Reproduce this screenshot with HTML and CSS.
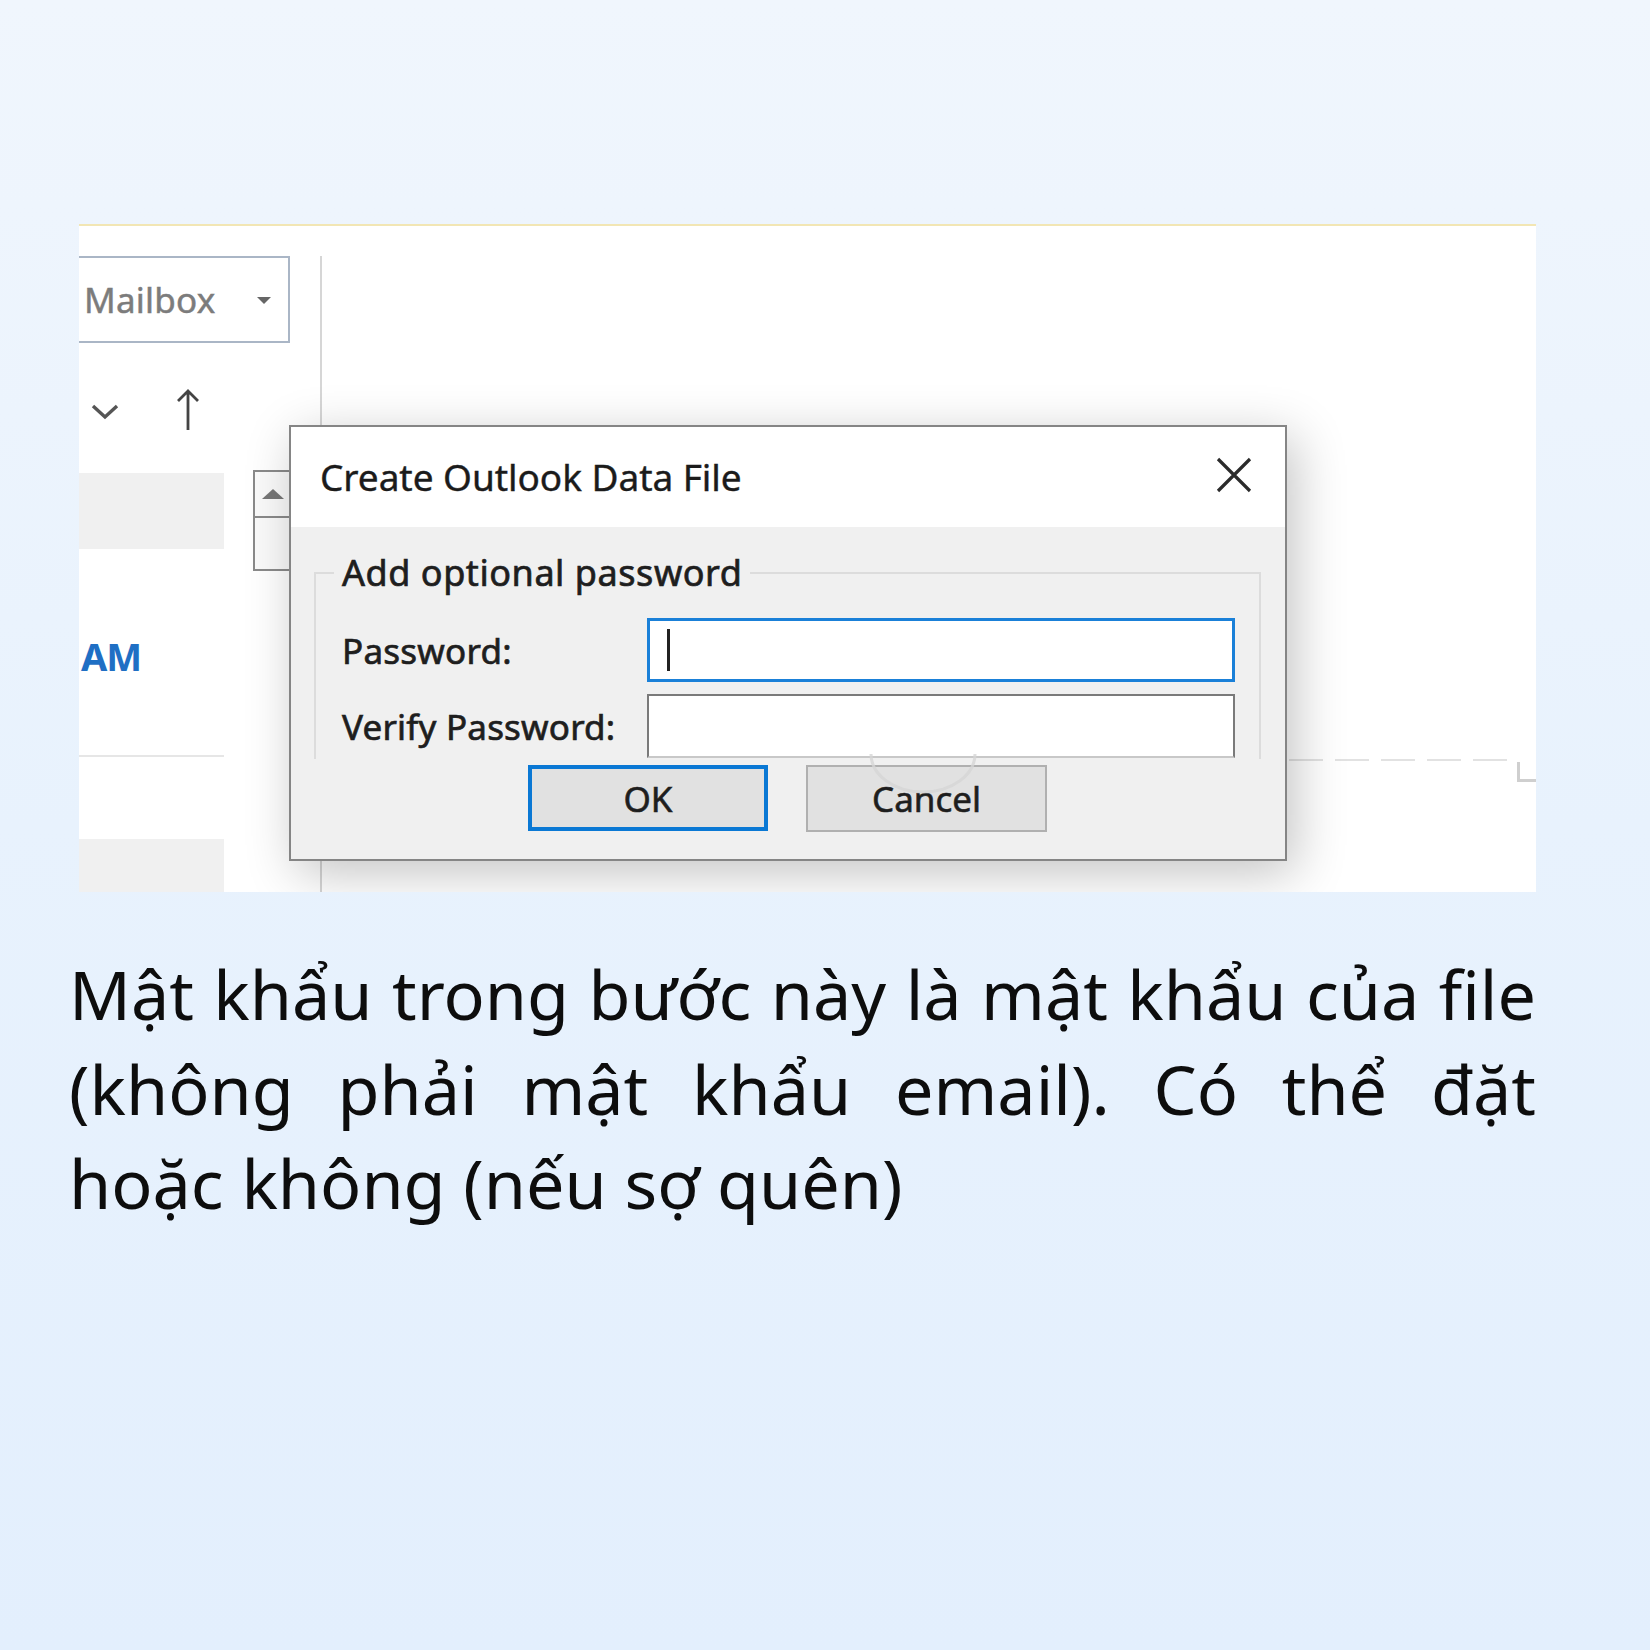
FILE: index.html
```html
<!DOCTYPE html>
<html lang="vi">
<head>
<meta charset="utf-8">
<title>Create Outlook Data File</title>
<link rel="stylesheet" href="styles.css">
</head>
<body>
<main class="page">
  <section class="shot">
    <div class="pane">
      <div class="mailbox">
        <span class="mailbox-text">Mailbox</span>
        <svg class="caret" width="14" height="8" viewBox="0 0 14 8"><path d="M0 0 H14 L7 7 Z" fill="#666"/></svg>
      </div>
      <div class="sortrow">
        <svg class="chev" width="30" height="20" viewBox="0 0 30 20"><path d="M3 4 L15 15 L27 4" fill="none" stroke="#555" stroke-width="3.4"/></svg>
        <svg class="uparrow" width="24" height="42" viewBox="0 0 24 42"><path d="M12 2 V41 M2 12 L12 2 L22 12" fill="none" stroke="#444" stroke-width="2.8"/></svg>
      </div>
      <div class="graybar"></div>
      <div class="time">AM</div>
      <div class="rule"></div>
      <div class="graybar last"></div>
    </div>

    <div class="scroll">
      <div class="scroll-up"><svg width="22" height="12" viewBox="0 0 22 12"><path d="M0 11 L11 1 L22 11 Z" fill="#777"/></svg></div>
    </div>

    <div class="dialog">
      <div class="titlebar">
        <span class="title">Create Outlook Data File</span>
        <svg class="close" width="36" height="36" viewBox="0 0 36 36"><path d="M2 2 L34 34 M34 2 L2 34" stroke="#2b2b2b" stroke-width="3.2"/></svg>
      </div>
      <div class="dbody">
        <fieldset class="group">
          <legend>Add optional password</legend>
          <div class="row">
            <label class="lbl">Password:</label>
            <div class="input active"><span class="cursor"></span></div>
          </div>
          <div class="row">
            <label class="lbl verify">Verify Password:</label>
            <div class="input"></div>
          </div>
        </fieldset>
        <div class="buttons">
          <div class="btn ok">OK</div>
          <div class="btn cancel">Cancel</div>
        </div>
      </div>
    </div>

    <svg class="arc" width="120" height="60" viewBox="0 0 120 60"><path d="M8 18 A 52 38 0 0 0 112 18" fill="none" stroke="#d6d6d6" stroke-width="3"/></svg>
    <div class="dashes"></div>
    <div class="corner"></div>
  </section>

  <p class="caption"><span class="cap-body">Mật khẩu trong bước này là mật khẩu của file (không phải mật khẩu email). Có thể đặt</span> <span class="cap-end">hoặc không (nếu sợ quên)</span></p>
</main>
</body>
</html>
```
FILE: styles.css
```css
html, body {
  margin: 0;
  padding: 0;
}
body {
  width: 1650px;
  height: 1650px;
  background: linear-gradient(180deg, #f0f6fd 0%, #e8f2fd 50%, #e3effd 100%);
  font-family: "Noto Sans", "Open Sans", sans-serif;
  overflow: hidden;
}
.page {
  display: flex;
  flex-direction: column;
  padding-top: 224px;
}
.shot {
  position: relative;
  margin-left: 79px;
  width: 1457px;
  height: 668px;
  box-sizing: border-box;
  background: #ffffff;
  border-top: 2px solid #f2e6b4;
  overflow: hidden;
  display: flex;
}
.pane {
  margin-top: 30px;
  width: 241px;
  border-right: 2px solid #d6d6d6;
  display: flex;
  flex-direction: column;
}
.mailbox {
  width: 211px;
  height: 87px;
  box-sizing: border-box;
  border: 2px solid #aab6c6;
  border-left: none;
  display: flex;
  align-items: center;
  justify-content: space-between;
  padding: 0 17px 0 5px;
}
.mailbox-text {
  font-size: 35px;
  color: #7c7c7c;
  letter-spacing: 0.2px;
  -webkit-text-stroke: 0.5px #7c7c7c;
}
.caret {
  margin-top: 2px;
}
.sortrow {
  margin-top: 37px;
  height: 64px;
  display: flex;
  align-items: center;
  padding-left: 11px;
  gap: 56px;
}
.uparrow {
  margin-top: -4px;
}
.graybar {
  margin-top: 29px;
  width: 145px;
  height: 76px;
  background: #f0f0f0;
}
.graybar.last {
  margin-top: 82px;
  flex: 1;
}
.time {
  margin-top: 87px;
  padding-left: 2px;
  font-size: 38px;
  line-height: 40px;
  font-weight: 700;
  color: #1f6fc4;
  letter-spacing: -1px;
}
.rule {
  margin-top: 79px;
  width: 145px;
  height: 2px;
  background: #e6e6e6;
}
.scroll {
  position: absolute;
  left: 174px;
  top: 244px;
  width: 44px;
  height: 101px;
  box-sizing: border-box;
  border: 2px solid #8a8a8a;
  background: #fafafa;
}
.scroll-up {
  height: 44px;
  border-bottom: 2px solid #8a8a8a;
  display: flex;
  align-items: center;
  justify-content: center;
  padding-right: 4px;
}
.dialog {
  position: absolute;
  left: 210px;
  top: 199px;
  width: 998px;
  height: 436px;
  box-sizing: border-box;
  border: 2px solid #858585;
  background: #f0f0f0;
  box-shadow: 8px 12px 48px rgba(0, 0, 0, 0.24);
  display: flex;
  flex-direction: column;
  z-index: 2;
}
.titlebar {
  height: 100px;
  background: #ffffff;
  display: flex;
  align-items: center;
  justify-content: space-between;
  padding: 0 33px 0 29px;
}
.title {
  font-size: 37px;
  line-height: 100px;
  color: #1b1b1b;
  letter-spacing: -0.05px;
  -webkit-text-stroke: 0.4px #1b1b1b;
}
.close {
  margin-top: -4px;
}
.dbody {
  flex: 1;
  padding: 22px 24px 0 23px;
}
.group {
  margin: 0;
  padding: 0 24px 0 0;
  border: 2px solid #dcdcdc;
  border-bottom: none;
  height: 210px;
  box-sizing: border-box;
}
.group legend {
  margin-left: 18px;
  padding: 0 8px;
  font-size: 36px;
  line-height: 48px;
  color: #1e1e1e;
  letter-spacing: 0.55px;
  -webkit-text-stroke: 0.7px #1e1e1e;
}
.row {
  display: flex;
  align-items: center;
  padding-left: 26px;
  margin-top: 12px;
}
.row:first-of-type {
  margin-top: 21px;
}
.lbl {
  width: 305px;
  font-size: 35px;
  color: #1e1e1e;
  letter-spacing: 0.25px;
  -webkit-text-stroke: 0.7px #1e1e1e;
}
.lbl.verify {
  letter-spacing: 0.2px;
}
.input {
  flex: 1;
  height: 64px;
  box-sizing: border-box;
  background: #ffffff;
  border: 2px solid #7a7a7a;
  border-bottom-color: #c8c8c8;
  display: flex;
  align-items: center;
}
.input.active {
  border: 3px solid #1a80d8;
}
.cursor {
  margin-left: 17px;
  width: 3px;
  height: 42px;
  background: #222;
}
.buttons {
  display: flex;
  gap: 38px;
  padding-left: 214px;
  margin-top: 6px;
}
.btn {
  width: 241px;
  height: 66px;
  box-sizing: border-box;
  background: #e1e1e1;
  display: flex;
  align-items: center;
  justify-content: center;
  font-size: 35px;
  color: #1e1e1e;
  -webkit-text-stroke: 0.6px #1e1e1e;
}
.btn.ok {
  width: 240px;
  border: 4px solid #0a78d4;
}
.btn.cancel {
  height: 67px;
  border: 2px solid #b0b0b0;
}
.arc {
  position: absolute;
  left: 784px;
  top: 510px;
  z-index: 3;
  opacity: 0.8;
}
.dashes {
  position: absolute;
  left: 1210px;
  top: 533px;
  width: 225px;
  height: 2px;
  background: repeating-linear-gradient(90deg, #e2e2e2 0 34px, transparent 34px 46px);
}
.corner {
  position: absolute;
  left: 1438px;
  top: 536px;
  width: 22px;
  height: 20px;
  box-sizing: border-box;
  border-left: 3px solid #cfcfcf;
  border-bottom: 3px solid #cfcfcf;
}
.caption {
  margin: 55px 0 0 69px;
  width: 1467px;
  font-size: 68.3px;
  line-height: 94.7px;
  color: #0d0d0d;
}
.cap-body {
  display: block;
  text-align: justify;
  text-align-last: justify;
}
.cap-end {
  display: block;
}
```
